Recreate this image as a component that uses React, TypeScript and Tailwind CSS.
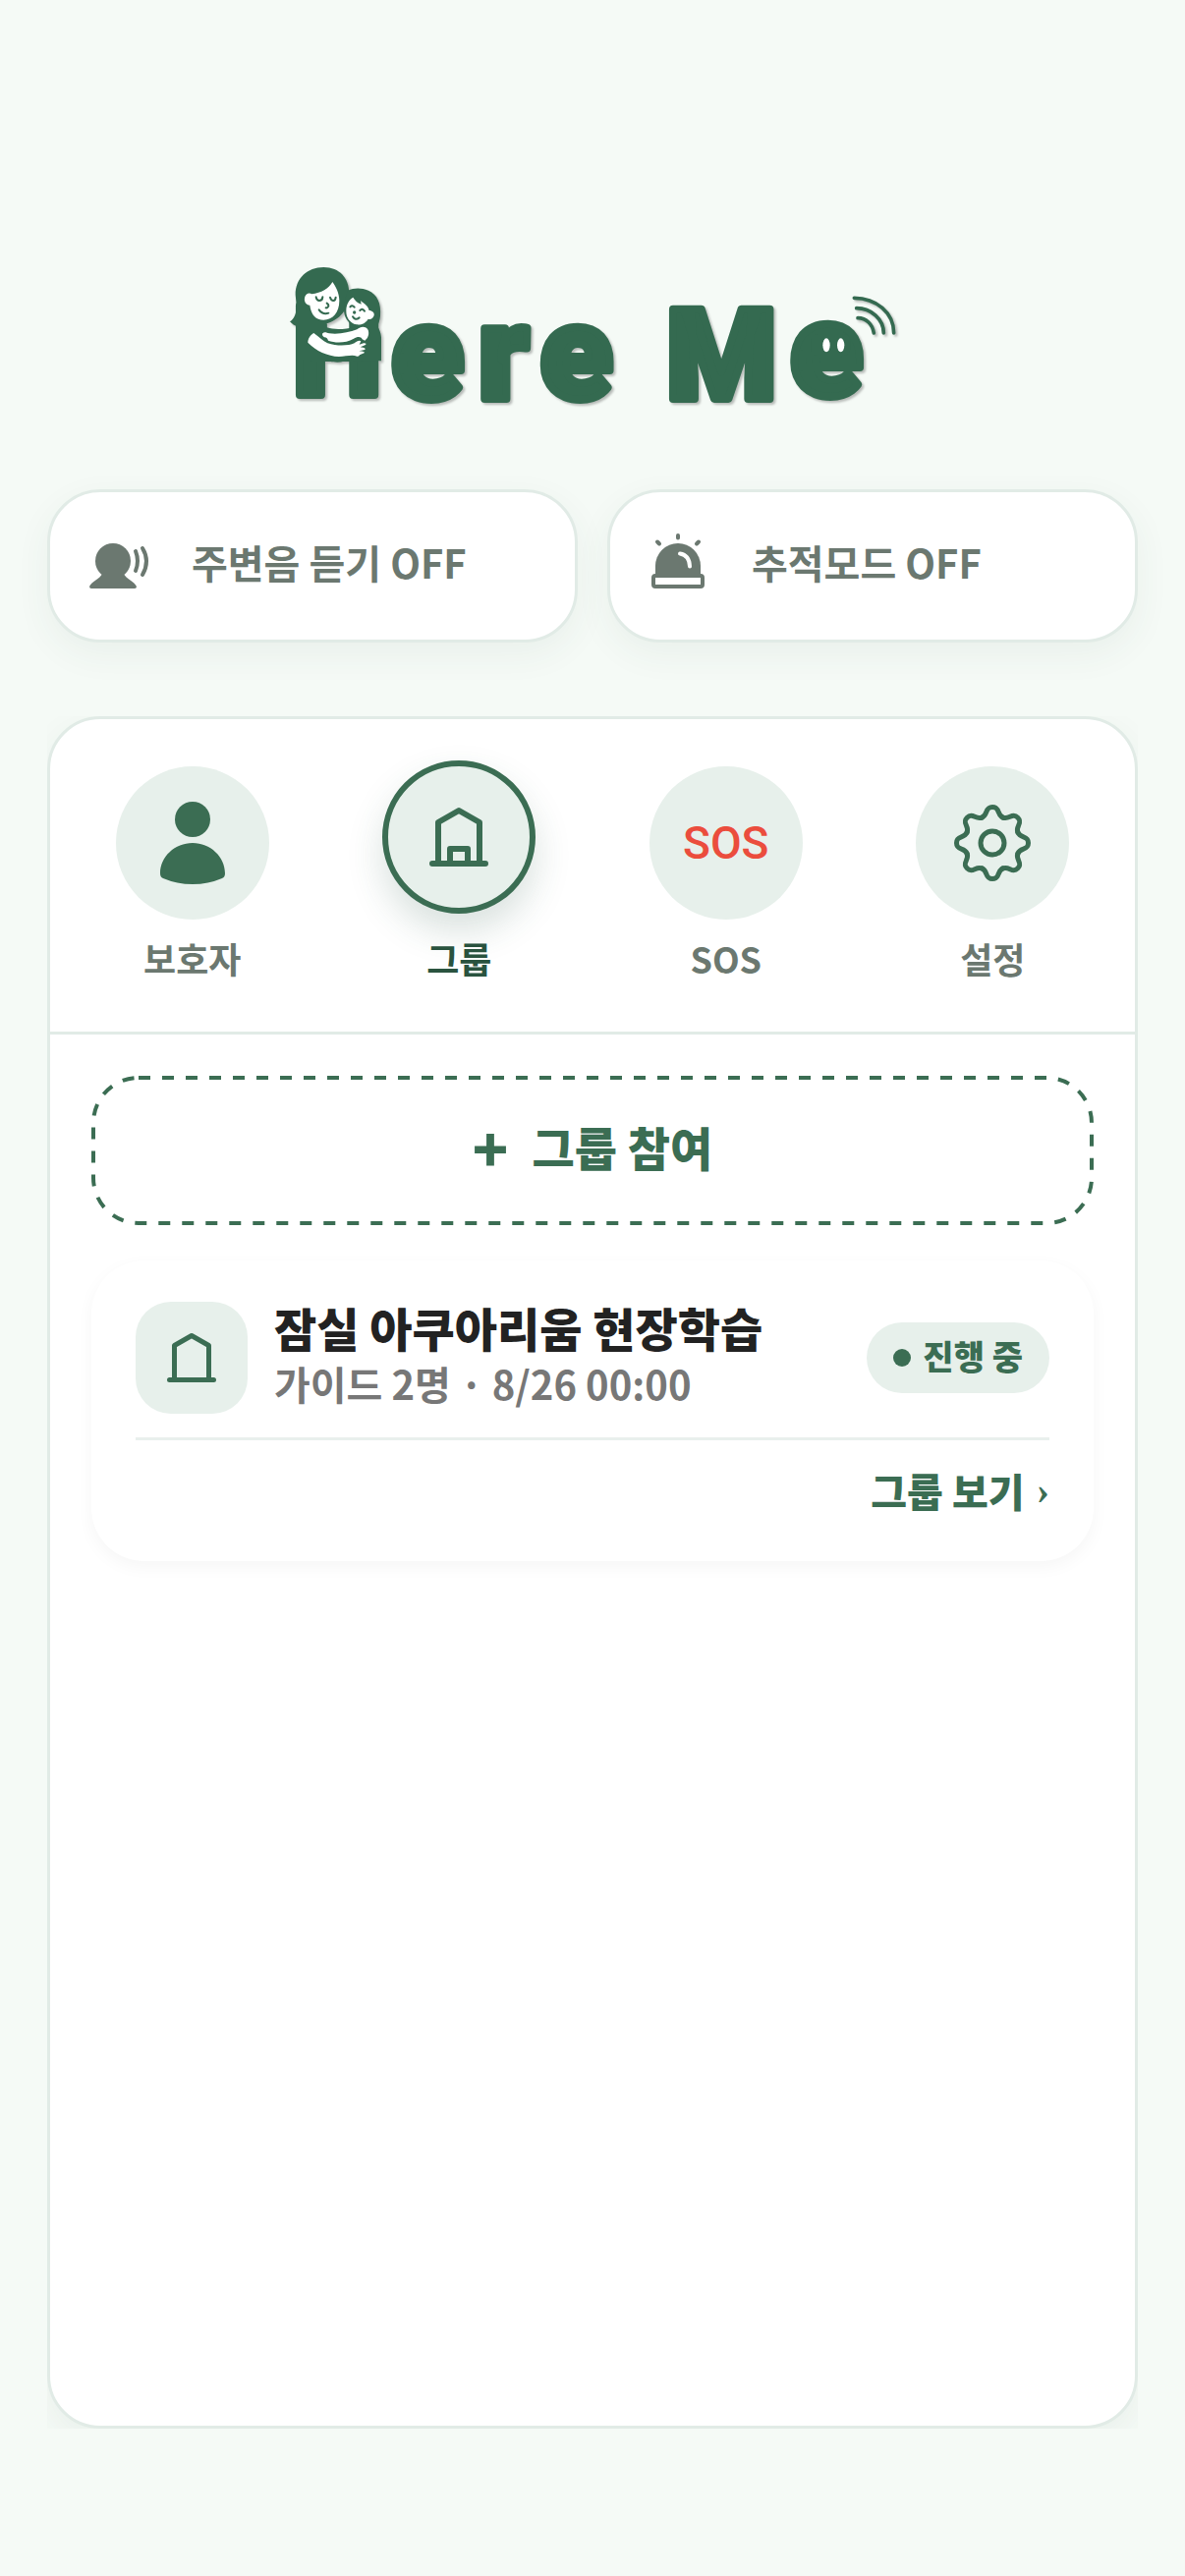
import type { ReactNode } from 'react'
import clsx from 'clsx'

type Tab = {
  id: string
  label: string
  icon: ReactNode
}

type Group = {
  id: string
  title: string
  subtitle: string
  status: string
}

const tabs: Tab[] = [
  { id: 'guardian', label: '보호자', icon: <PersonIcon /> },
  { id: 'group', label: '그룹', icon: <HouseIcon size={72} door /> },
  { id: 'sos', label: 'SOS', icon: <SosIcon /> },
  { id: 'settings', label: '설정', icon: <GearIcon /> },
]

const groups: Group[] = [
  {
    id: '1',
    title: '잠실 아쿠아리움 현장학습',
    subtitle: '가이드 2명 · 8/26 00:00',
    status: '진행 중',
  },
]

export default function App() {
  return (
    <div className="flex min-h-screen flex-col bg-[#f5faf6] px-12 pt-[265px] pb-[150px] font-['Noto_Sans_CJK_KR',sans-serif]">
      <h1 className="flex justify-center">
        <Logo />
      </h1>

      <div className="mt-[83px] grid grid-cols-2 gap-[30px]">
        <ModeButton icon={<ListenIcon />}>주변음 듣기 OFF</ModeButton>
        <ModeButton icon={<SirenIcon />}>추적모드 OFF</ModeButton>
      </div>

      <div className="mt-[75px] flex flex-1 flex-col overflow-hidden">
        <main className="flex flex-1 flex-col rounded-[54px] border-3 border-[#e1ebe6] bg-white shadow-[0_12px_36px_rgba(45,90,70,0.06)]">
          <TabBar activeId="group" />
          <div className="flex flex-col gap-9 p-[42px]">
            <JoinButton />
            {groups.map((group) => (
              <GroupCard key={group.id} group={group} />
            ))}
          </div>
        </main>
      </div>
    </div>
  )
}

function ModeButton({ icon, children }: { icon: ReactNode; children: ReactNode }) {
  return (
    <button
      type="button"
      className="flex h-[156px] items-center gap-[39px] rounded-[54px] border-3 border-[#e1ebe6] bg-white px-[33px] text-[40px] leading-[54px] font-bold whitespace-nowrap text-[#6b7870] shadow-[0_12px_36px_rgba(45,90,70,0.06)]"
    >
      {icon}
      <span className="pb-2">{children}</span>
    </button>
  )
}

function TabBar({ activeId }: { activeId: string }) {
  return (
    <nav className="grid grid-cols-4 border-b-3 border-[#e1ebe6] px-[9px] py-12">
      {tabs.map((tab) => {
        const active = tab.id === activeId
        return (
          <button
            key={tab.id}
            type="button"
            aria-current={active ? 'page' : undefined}
            className="flex flex-col items-center gap-3"
          >
            <span
              className={clsx(
                'flex size-[156px] items-center justify-center rounded-full bg-[#e7f0eb]',
                active &&
                  '-translate-y-1.5 border-6 border-[#3b6d53] shadow-[0_18px_36px_rgba(45,90,70,0.18)]',
              )}
            >
              {tab.icon}
            </span>
            <span
              className={clsx(
                'text-[36px] leading-[54px] font-bold',
                active ? 'text-[#2a533f]' : 'text-[#6b7870]',
              )}
            >
              {tab.label}
            </span>
          </button>
        )
      })}
    </nav>
  )
}

function JoinButton() {
  return (
    <button
      type="button"
      className="relative flex h-[152px] items-center justify-center gap-6 pb-2 text-[47px] leading-[60px] font-black text-[#3b6d53]"
    >
      <svg className="absolute inset-0 size-full" fill="none" aria-hidden="true">
        <rect
          x="2"
          y="2"
          rx="46"
          className="h-[calc(100%-4px)] w-[calc(100%-4px)]"
          stroke="#3b6d53"
          strokeWidth="4"
          strokeDasharray="12 12"
        />
      </svg>
      <span className="text-[60px]">+</span>
      <span>그룹 참여</span>
    </button>
  )
}

function GroupCard({ group }: { group: Group }) {
  return (
    <article className="rounded-[54px] bg-white px-[45px] py-[42px] shadow-[0_6px_18px_rgba(0,0,0,0.04)]">
      <div className="flex items-center border-b-3 border-[#e9f0ed] pb-6">
        <div className="flex size-[114px] shrink-0 items-center justify-center rounded-[36px] bg-[#e7f0eb]">
          <HouseIcon size={60} />
        </div>
        <div className="-mt-2 ml-[27px] flex-1">
          <h2 className="text-[47px] leading-[60px] font-black text-[#222]">{group.title}</h2>
          <p className="text-[40px] leading-[54px] font-bold text-[#777]">{group.subtitle}</p>
        </div>
        <div className="flex h-[72px] items-center gap-3 rounded-full bg-[#e7f0eb] px-[27px]">
          <span className="size-[18px] rounded-full bg-[#3b6d53]" />
          <span className="pb-1 text-[34px] leading-[54px] font-black text-[#3b6d53]">
            {group.status}
          </span>
        </div>
      </div>
      <div className="flex justify-end pt-6 pb-[3px]">
        <a
          href="#group"
          className="flex items-center gap-3 text-[40px] leading-[54px] font-black text-[#3b6d53]"
        >
          그룹 보기
          <span className="font-['Liberation_Serif',serif]">›</span>
        </a>
      </div>
    </article>
  )
}

function Logo() {
  return (
    <svg
      viewBox="30 45 1878 450"
      className="w-[626px] max-w-full overflow-visible drop-shadow-[2px_2px_1px_rgba(0,0,0,0.25)]"
      role="img"
      aria-label="Here Me"
      fill="#346a50"
    >
      <g
        className="font-['Roboto',sans-serif] font-black"
        stroke="#346a50"
        strokeWidth="24"
        strokeLinejoin="round"
      >
        <text x="54" y="457" fontSize="385">H</text>
        <text x="355" y="467" fontSize="405">e</text>
        <text x="620" y="469" fontSize="405">r</text>
        <text x="809" y="467" fontSize="405">e</text>
        <text x="1194" y="467" fontSize="385">M</text>
        <text x="1573" y="459" fontSize="405">e</text>
      </g>

      {/* mother and child */}
      <path d="M45 232C58 224 66 206 65 182L62 150C62 100 98 66 148 66C197 66 226 100 226 145C226 185 208 222 158 238V262H72V248C60 246 50 238 45 232Z" />
      <path d="M222 137C240 129 262 128 285 137C312 150 324 175 321 215C320 228 316 238 312 246C318 254 323 266 324 280V352H242C220 346 210 356 190 356C170 356 165 352 156 348H72V240H158V250C180 258 215 256 243 248C222 236 210 218 210 195C210 180 214 160 222 137Z" />
      <g fill="#fff">
        <path d="M175 111C185 125 196 145 196 168C196 205 175 227 148 227C125 227 110 212 106 182C95 182 88 172 90 160C92 148 103 142 112 148C140 145 165 130 175 111Z" />
        <path d="M238 158C245 168 250 174 263 179L261 168C268 176 283 180 287 198C296 198 304 205 302 213C299 224 290 226 284 224C276 238 262 243 248 241C228 236 217 220 217 200C217 180 225 165 238 158Z" />
        <path d="M145 268C150 262 158 266 165 268C195 272 225 265 250 256C262 245 278 246 284 258C288 270 284 282 274 290L266 286C262 276 250 278 240 284C215 298 185 298 162 290C160 284 158 280 150 280C144 276 143 271 145 268Z" />
        <path d="M118 267C108 272 100 284 100 296C125 322 160 337 195 339C215 339 235 332 250 338Q257 339 258 334L272 328Q276 323 256 322L274 318Q279 312 260 310L276 303Q281 297 270 298L257 302L262 292C258 288 250 290 242 298C225 306 190 308 160 298C145 290 135 280 118 267Z" />
      </g>
      <g fill="none" stroke="#346a50" strokeWidth="6" strokeLinecap="round">
        <path d="M125 157Q127 168 135 168Q144 168 145 157M168 158Q171 168 178 168Q184 168 185 158" />
        <path d="M158 176Q164 180 163 185Q160 191 155 190M134 196Q146 212 163 206" />
        <path d="M229 187Q235 180 242 188M259 198Q266 190 273 200M237 217Q244 230 257 220" />
      </g>
      <circle cx="242" cy="204" r="5" />

      {/* smiling e */}
      <rect x="1636" y="270" width="120" height="66" rx="20" />
      <g fill="#fff">
        <ellipse cx="1683" cy="304" rx="11" ry="21" />
        <ellipse cx="1727" cy="304" rx="11" ry="21" />
      </g>
      <path
        d="M1768 160C1835 160 1889 205 1889 267M1775 191C1820 191 1858 225 1858 267M1779 221C1805 221 1824 240 1828 267"
        fill="none"
        stroke="#346a50"
        strokeWidth="11"
        strokeLinecap="round"
      />
    </svg>
  )
}

function ListenIcon() {
  return (
    <svg viewBox="0 0 72 72" className="size-[72px] shrink-0" fill="#6b7870" aria-hidden="true">
      <circle cx="31" cy="31" r="18" />
      <path d="M20 44C18 49 9 52 7 57Q7 59 9 59H53Q55 59 55 57C53 52 44 49 42 44Z" />
      <path
        d="M54 21Q58 31 54 41M61 18Q69 31 61 45"
        fill="none"
        stroke="#6b7870"
        strokeWidth="4"
        strokeLinecap="round"
      />
    </svg>
  )
}

function SirenIcon() {
  return (
    <svg
      viewBox="0 0 72 72"
      className="size-[72px] shrink-0"
      fill="none"
      stroke="#6b7870"
      strokeWidth="4"
      strokeLinecap="round"
      aria-hidden="true"
    >
      <path d="M13 46V36a23 23 0 0 1 46 0v10z" fill="#6b7870" stroke="none" />
      <rect x="11" y="46" width="50" height="11" rx="2" />
      <path d="M38 23.5Q47.5 25 48 36.5" stroke="#fff" />
      <path d="M36 5v2.5M15 11.5l2 2M57 11.5l-2 2" />
    </svg>
  )
}

function PersonIcon() {
  return (
    <svg viewBox="0 0 84 84" className="size-[84px]" fill="#3b6d53" aria-hidden="true">
      <circle cx="42" cy="18" r="18" />
      <path d="M42 42C60 42 75 56 75 73Q75 77 72 78Q58 84 42 84Q26 84 12 78Q9 77 9 73C9 56 24 42 42 42Z" />
    </svg>
  )
}

function HouseIcon({ size, door = false }: { size: number; door?: boolean }) {
  return (
    <svg
      viewBox="0 0 24 24"
      width={size}
      height={size}
      fill="none"
      stroke="#3b6d53"
      strokeWidth="2"
      strokeLinecap="round"
      strokeLinejoin="round"
      aria-hidden="true"
    >
      <path d="M3 21h18M5 21V7l7-4 7 4v14" />
      {door && <path d="M9 21v-5h6v5" />}
    </svg>
  )
}

function SosIcon() {
  return (
    <span className="font-['Liberation_Sans_Narrow','Roboto',sans-serif] text-[46px] font-medium text-[#eb4d3d]">
      SOS
    </span>
  )
}

function GearIcon() {
  return (
    <svg
      viewBox="-42 -42 84 84"
      className="size-[84px]"
      fill="none"
      stroke="#3b6d53"
      strokeWidth="5"
      strokeLinecap="round"
      aria-hidden="true"
    >
      {[0, 45, 90, 135, 180, 225, 270, 315].map((angle) => (
        <path
          key={angle}
          d="M-10.7 -25.9C-4.2 -28.6 -8 -36.5 0 -36.5C8 -36.5 4.2 -28.6 10.7 -25.9"
          transform={`rotate(${angle})`}
        />
      ))}
      <circle r="12" />
    </svg>
  )
}
